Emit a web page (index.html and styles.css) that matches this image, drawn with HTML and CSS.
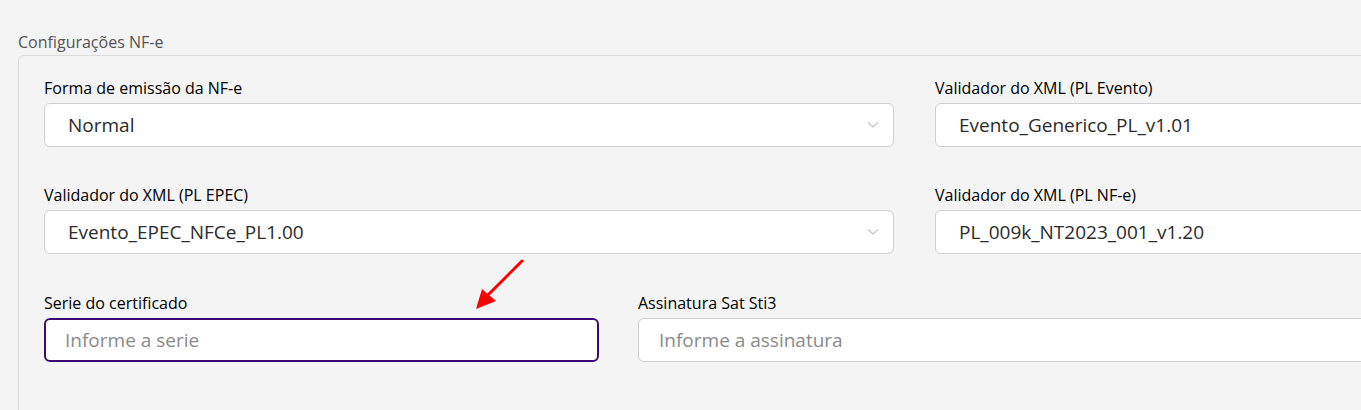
FILE: index.html
```html
<!DOCTYPE html>
<html lang="pt-BR">
<head>
<meta charset="utf-8">
<title>Configurações NF-e</title>
<link rel="stylesheet" href="styles.css">
</head>
<body>
<div class="page">
  <fieldset class="group">
    <legend class="group-title">Configurações NF-e</legend>
    <div class="row row-two">
      <div class="field">
        <label class="label">Forma de emissão da NF-e</label>
        <div class="control select">
          <span class="value">Normal</span>
          <svg class="chev" width="12" height="8" viewBox="0 0 12 8"><path d="M1 1.5 L6 6 L11 1.5" fill="none" stroke="#c4c4c4" stroke-width="1.2"/></svg>
        </div>
      </div>
      <div class="field">
        <label class="label">Validador do XML (PL Evento)</label>
        <div class="control"><span class="value">Evento_Generico_PL_v1.01</span></div>
      </div>
    </div>
    <div class="row row-two">
      <div class="field">
        <label class="label">Validador do XML (PL EPEC)</label>
        <div class="control select">
          <span class="value">Evento_EPEC_NFCe_PL1.00</span>
          <svg class="chev" width="12" height="8" viewBox="0 0 12 8"><path d="M1 1.5 L6 6 L11 1.5" fill="none" stroke="#c4c4c4" stroke-width="1.2"/></svg>
        </div>
      </div>
      <div class="field">
        <label class="label">Validador do XML (PL NF-e)</label>
        <div class="control"><span class="value">PL_009k_NT2023_001_v1.20</span></div>
      </div>
    </div>
    <div class="row row-three">
      <div class="field">
        <label class="label">Serie do certificado</label>
        <div class="control focused"><span class="placeholder">Informe a serie</span></div>
        <svg class="arrow" width="60" height="60" viewBox="0 0 60 60">
          <line x1="54" y1="6" x2="18" y2="42" stroke="#ff0000" stroke-width="3" stroke-linecap="round"/>
          <polygon points="8,54 14,34 28,46" fill="#ff0000"/>
        </svg>
      </div>
      <div class="field">
        <label class="label">Assinatura Sat Sti3</label>
        <div class="control plain"><span class="placeholder">Informe a assinatura</span></div>
      </div>
    </div>
  </fieldset>
</div>
</body>
</html>
```
FILE: styles.css
```css
html, body {
  margin: 0;
  padding: 0;
  background: #f4f4f4;
  overflow: hidden;
}
body {
  width: 1361px;
  height: 410px;
  font-family: "Open Sans", Lato, sans-serif;
  color: #1a1a1a;
}
.page {
  padding: 55px 0 0 18px;
  height: 410px;
  box-sizing: border-box;
  overflow: hidden;
}
.group {
  margin: 0;
  padding: 22px 0 0 25px;
  width: 1900px;
  height: 400px;
  border: 1px solid #dcdcdc;
  border-radius: 6px 0 0 0;
  box-sizing: border-box;
  position: relative;
}
.group-title {
  position: absolute;
  top: -25px;
  left: -1px;
  padding: 0;
  font-size: 16px;
  line-height: 22px;
  color: #555555;
}
.row {
  display: grid;
  margin-bottom: 38px;
}
.row-two {
  grid-template-columns: 850px 850px;
  column-gap: 41px;
}
.row-three {
  margin-top: 39px;
  grid-template-columns: 555px 900px;
  column-gap: 39px;
}
.field {
  display: flex;
  flex-direction: column;
  position: relative;
}
.label {
  font-size: 16px;
  line-height: 21px;
  margin-bottom: 4px;
  color: #000;
}
.control {
  height: 44px;
  box-sizing: border-box;
  background: #ffffff;
  border: 1px solid #cfcfcf;
  border-radius: 6px;
  display: flex;
  align-items: center;
  padding: 0 20px 0 23px;
  font-size: 19px;
}
.control.plain {
  padding-left: 20px;
}
.select {
  justify-content: space-between;
  padding-right: 14px;
}
.value { color: #2b2b2b; }
.placeholder { color: #8a8a8a; }
.control.focused {
  border: 2px solid #3a0b78;
  padding-left: 19px;
}
.arrow {
  position: absolute;
  left: 424px;
  top: -38px;
}
```
